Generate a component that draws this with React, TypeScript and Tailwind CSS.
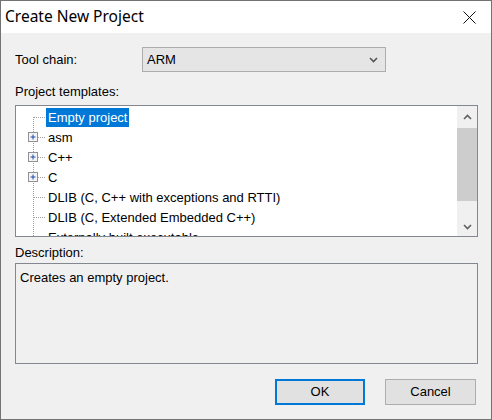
const body = { fontFamily: '"Liberation Sans", Arial, sans-serif' };

interface TreeRow {
  label: string;
  expandable?: boolean;
  selected?: boolean;
  first?: boolean;
}

const rows: TreeRow[] = [
  { label: "Empty project", selected: true, first: true },
  { label: "asm", expandable: true },
  { label: "C++", expandable: true },
  { label: "C", expandable: true },
  { label: "DLIB (C, C++ with exceptions and RTTI)" },
  { label: "DLIB (C, Extended Embedded C++)" },
  { label: "Externally built executable" },
];

function Connector({ expandable, first }: { expandable?: boolean; first?: boolean }) {
  // dotted tree lines, vertical trunk at x=17
  return (
    <svg width="30" height="20" className="shrink-0">
      <line
        x1="17.5"
        y1={first ? 10 : 0}
        x2="17.5"
        y2="20"
        stroke="#a0a0a0"
        strokeDasharray="1 1"
      />
      <line x1={expandable ? 22 : 18} y1="10.5" x2="30" y2="10.5" stroke="#a0a0a0" strokeDasharray="1 1" />
      {expandable && (
        <g>
          <rect x="12.5" y="5.5" width="9" height="9" fill="#f4f4f4" stroke="#919191" />
          <line x1="14.5" y1="10" x2="19.5" y2="10" stroke="#1c4fa8" />
          <line x1="17" y1="7.5" x2="17" y2="12.5" stroke="#1c4fa8" />
        </g>
      )}
    </svg>
  );
}

function Chevron({ dir, color = "#606060" }: { dir: "up" | "down"; color?: string }) {
  return (
    <svg width="9" height="6" viewBox="0 0 9 6">
      <path
        d={dir === "down" ? "M1 1 L4.5 4.5 L8 1" : "M1 5 L4.5 1.5 L8 5"}
        fill="none"
        stroke={color}
        strokeWidth="1.6"
      />
    </svg>
  );
}

export default function App() {
  return (
    <div className="w-[492px] h-[420px] flex flex-col border border-[#737373] bg-[#f0f0f0] text-black" style={body}>
      {/* title bar */}
      <div className="h-[32px] shrink-0 bg-white flex items-center justify-between pl-[4px] pr-[15px]">
        <span className="text-[15.5px]" style={{ fontFamily: '"Noto Sans", sans-serif' }}>
          Create New Project
        </span>
        <svg width="13" height="13" viewBox="0 0 13 13">
          <path d="M0.5 0.5 L12.5 12.5 M12.5 0.5 L0.5 12.5" stroke="#111" strokeWidth="1" />
        </svg>
      </div>

      <div className="flex-1 flex flex-col pl-[14px] pr-[13px] pt-[14px] text-[13px]">
        {/* tool chain */}
        <div className="flex items-center h-[25px]">
          <span className="w-[127px]">Tool chain:</span>
          <div className="w-[244px] h-[25px] flex items-center justify-between bg-[#e5e5e5] border border-[#adadad] pl-[4px] pr-[7px]">
            <span>ARM</span>
            <Chevron dir="down" color="#555" />
          </div>
        </div>

        <div className="mt-[12px] leading-[16px]">Project templates:</div>

        {/* templates tree */}
        <div className="mt-[5px] h-[132px] flex bg-white border border-[#828790] overflow-hidden">
          <div className="flex-1 pt-[1px]">
            {rows.map((r) => (
              <div key={r.label} className="flex items-center h-[20px] whitespace-nowrap">
                <Connector expandable={r.expandable} first={r.first} />
                <span
                  className={
                    r.selected
                      ? "bg-[#0078d7] text-white px-[2px] h-[19px] leading-[19px]"
                      : "px-[2px] leading-[19px]"
                  }
                >
                  {r.label}
                </span>
              </div>
            ))}
          </div>
          <div className="w-[20px] shrink-0 flex flex-col bg-[#f0f0f0]">
            <div className="h-[17px] flex items-center justify-center pt-[4px]">
              <Chevron dir="up" />
            </div>
            <div className="mt-[5px] h-[73px] bg-[#cdcdcd]" />
            <div className="flex-1" />
            <div className="h-[17px] flex items-center justify-center pb-[2px]">
              <Chevron dir="down" />
            </div>
          </div>
        </div>

        <div className="mt-[8px] leading-[16px]">Description:</div>

        <div className="mt-[2px] h-[101px] border border-[#828790] bg-[#f0f0f0] px-[4px] pt-[6px] leading-[16px]">
          Creates an empty project.
        </div>

        {/* buttons */}
        <div className="mt-[15px] flex justify-end gap-[20px] pr-[2px]">
          <button className="w-[90px] h-[26px] bg-[#e1e1e1] border-2 border-[#0078d7]">OK</button>
          <button className="w-[91px] h-[26px] bg-[#e1e1e1] border border-[#adadad]">Cancel</button>
        </div>
      </div>
    </div>
  );
}
